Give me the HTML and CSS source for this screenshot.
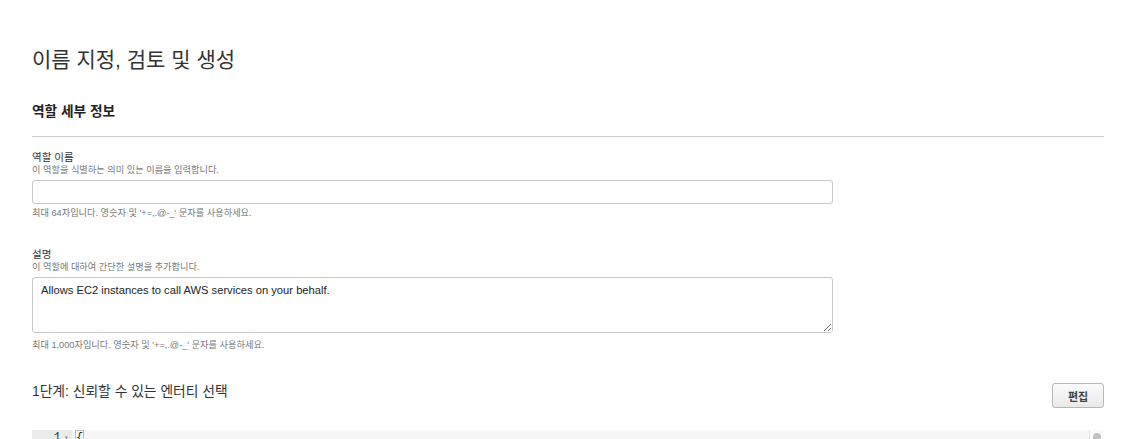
FILE: index.html
```html
<!DOCTYPE html>
<html lang="ko">
<head>
    <meta charset="UTF-8">
    <meta name="viewport" content="width=device-width, initial-scale=1.0">
    <title>역할 생성</title>
    <link rel="stylesheet" href="styles.css">
</head>
<body>
    <div class="page">
        <h1 class="page-title">이름 지정, 검토 및 생성</h1>

        <h2 class="section-title">역할 세부 정보</h2>
        <hr class="divider">

        <div class="field">
            <label class="field-label" for="roleName">역할 이름</label>
            <div class="field-desc">이 역할을 식별하는 의미 있는 이름을 입력합니다.</div>
            <input type="text" id="roleName" class="text-input">
            <div class="field-hint">최대 64자입니다. 영숫자 및 '+=,.@-_' 문자를 사용하세요.</div>
        </div>

        <div class="field">
            <label class="field-label" for="roleDesc">설명</label>
            <div class="field-desc">이 역할에 대하여 간단한 설명을 추가합니다.</div>
            <textarea id="roleDesc" class="text-area">Allows EC2 instances to call AWS services on your behalf.</textarea>
            <div class="field-hint">최대 1,000자입니다. 영숫자 및 '+=,.@-_' 문자를 사용하세요.</div>
        </div>

        <div class="step-header">
            <h3 class="step-title">1단계: 신뢰할 수 있는 엔터티 선택</h3>
            <button type="button" class="btn">편집</button>
        </div>

        <div class="editor">
            <div class="editor-line">
                <span class="gutter"><span class="line-no">1</span><span class="fold">▾</span></span>
                <span class="code"><span class="bracket">{</span></span>
            </div>
            <span class="scroll-thumb"></span>
        </div>
    </div>
</body>
</html>
```

FILE: styles.css
```css
body {
    margin: 0;
    font-family: "Liberation Sans", "Noto Sans CJK KR", Arial, sans-serif;
    color: #333;
    background: #fff;
}
.page {
    padding: 0 22px 0 32px;
    overflow: hidden;
    height: 439px;
}
.page-title {
    font-size: 21px;
    font-weight: normal;
    line-height: 24px;
    margin: 48px 0 0;
    color: #333;
}
.section-title {
    font-size: 13.7px;
    font-weight: bold;
    line-height: 16px;
    margin: 32px 0 0;
    color: #222;
}
.divider {
    border: none;
    border-top: 1px solid #ccc;
    margin: 16px 0 0;
}
.field {
    margin-top: 13px;
}
.field + .field {
    margin-top: 28px;
}
.field-label {
    display: block;
    font-size: 10.5px;
    line-height: 14px;
    color: #333;
}
.field-desc {
    font-size: 9.2px;
    line-height: 12px;
    color: #777;
}
.text-input,
.text-area {
    display: block;
    box-sizing: border-box;
    width: 801px;
    margin-top: 4px;
    border: 1px solid #c8c8c8;
    border-radius: 3px;
    font-family: "Liberation Sans", Arial, sans-serif;
    font-size: 11.2px;
    color: #222;
    background: #fff;
}
.text-input {
    height: 24px;
}
.text-area {
    height: 56px;
    padding: 6px 8px;
    margin-bottom: 6px;
    resize: vertical;
}
.field-hint {
    font-size: 9.2px;
    line-height: 12px;
    color: #777;
    margin-top: 3px;
}
.step-header {
    display: flex;
    justify-content: space-between;
    align-items: flex-start;
    margin-top: 32px;
}
.step-title {
    font-size: 13.8px;
    font-weight: normal;
    line-height: 18px;
    margin: 0;
    color: #333;
}
.btn {
    width: 52px;
    height: 25px;
    border: 1px solid #b7b7b7;
    border-radius: 3px;
    background: linear-gradient(#fbfbfb, #e9e9e9);
    font-family: "Liberation Sans", "Noto Sans CJK KR", Arial, sans-serif;
    font-size: 11px;
    font-weight: bold;
    color: #444;
    padding: 0;
}
.editor {
    position: relative;
    margin-top: 22px;
    background: #f7f7f7;
    height: 20px;
}
.editor-line {
    display: flex;
    font-family: "Liberation Mono", monospace;
    font-size: 12px;
    line-height: 16px;
}
.gutter {
    display: flex;
    justify-content: flex-end;
    width: 40px;
    background: #ebebeb;
    color: #333;
}
.line-no {
    margin-right: 3px;
}
.fold {
    font-size: 8px;
    color: #999;
    width: 8px;
}
.code {
    padding-left: 3px;
    flex: 1;
}
.bracket {
    border: 1px solid #bbb;
}
.scroll-thumb {
    position: absolute;
    right: 0;
    top: 0;
    width: 14px;
    height: 20px;
    background: #fafafa;
    border-left: 1px solid #e3e3e3;
}
.scroll-thumb::after {
    content: "";
    position: absolute;
    left: 3px;
    top: 3px;
    width: 8px;
    height: 8px;
    border-radius: 50%;
    background: #c1c1c1;
}
```
